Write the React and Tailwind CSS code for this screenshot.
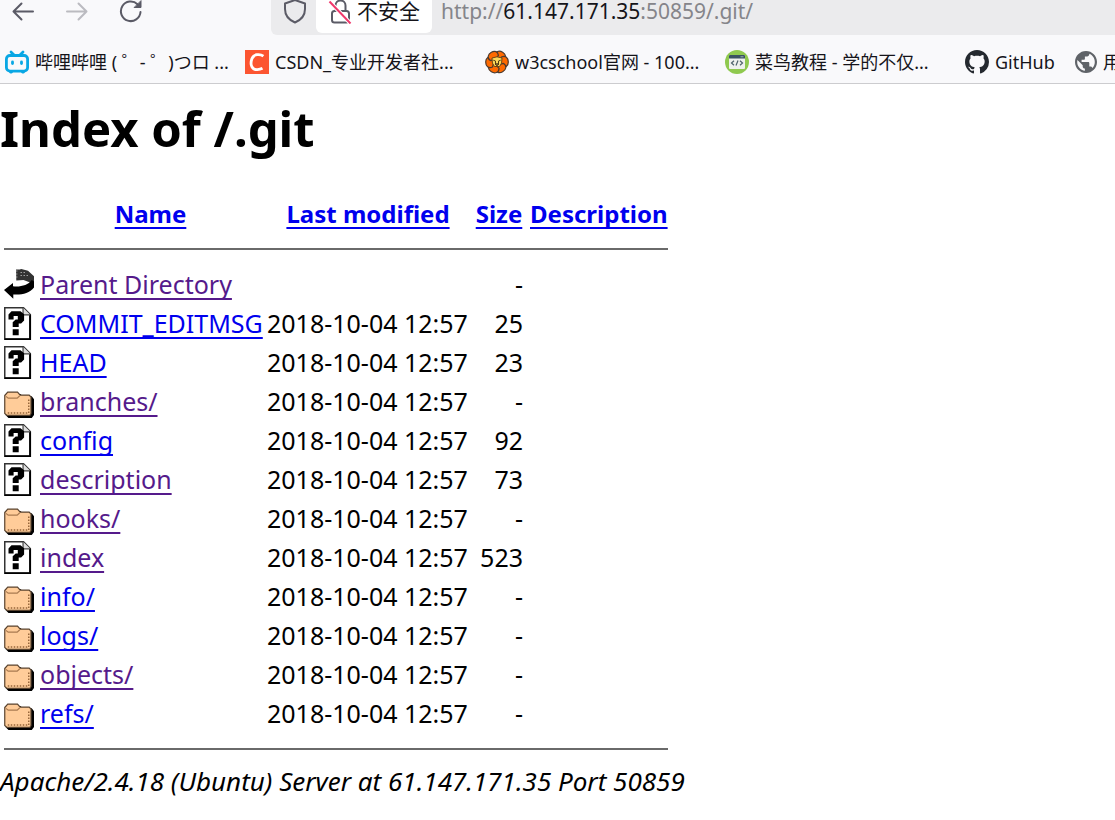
import React from 'react';

const files = [
  ['back', 'Parent Directory', '', '-', true],
  ['unknown', 'COMMIT_EDITMSG', '2018-10-04 12:57', '25', false],
  ['unknown', 'HEAD', '2018-10-04 12:57', '23', false],
  ['folder', 'branches/', '2018-10-04 12:57', '-', true],
  ['unknown', 'config', '2018-10-04 12:57', '92', false],
  ['unknown', 'description', '2018-10-04 12:57', '73', true],
  ['folder', 'hooks/', '2018-10-04 12:57', '-', true],
  ['unknown', 'index', '2018-10-04 12:57', '523', true],
  ['folder', 'info/', '2018-10-04 12:57', '-', false],
  ['folder', 'logs/', '2018-10-04 12:57', '-', false],
  ['folder', 'objects/', '2018-10-04 12:57', '-', true],
  ['folder', 'refs/', '2018-10-04 12:57', '-', false],
];

function FileIcon({ type }) {
  return (
    <svg viewBox="0 0 20 22" className="block h-[33px] w-[30px]" aria-hidden="true">
      {type === 'unknown' && (
        <>
          <path d="M.5 .5H13L17.5 5V21.5H.5Z" fill="#fff" stroke="#333" />
          <path d="M17.4 5V21.4H.5" fill="none" stroke="#000" strokeWidth="1.3" />
          <path d="M12.7 .5V5.2H17.5" fill="#ddd" stroke="#444" strokeWidth=".8" />
          <path d="M3 5L5 2.8H11L13.4 4.8V9L11.4 11H9.8V13.4H5.8V10.2L7.8 8.4H9.2V6H6.4V8.4H3ZM5.8 14.8H9.8V18.8H5.8Z" fill="#000" />
        </>
      )}
      {type === 'folder' && (
        <>
          <path d="M2.5 6H11L12.5 7.5H18.5L20 9.5V20L18.5 22H3L1 20Z" fill="#000" />
          <path d="M.5 7L2.5 4.7H9L10.8 6.7H16.8L18 8V19L17.2 20.3H2L.5 19Z" fill="#fc9" stroke="#59432f" strokeWidth=".8" />
          <path d="M1.3 7.6L2.8 8.8H8.8L10.5 7.2" fill="none" stroke="#a97a50" strokeWidth=".8" />
          <path d="M2.5 18.7H16.5V9" fill="none" stroke="#97663a" strokeWidth="1" strokeDasharray="1 1" />
        </>
      )}
      {type === 'back' && (
        <>
          <path d="M8 1H10.5L11.5 .6L16 1.8L20 5.5V12L17 9.5L13 8L8.2 8.3Z" fill="#333" />
          <path d="M8 2H10M8 4H10M8 6H10M11 3H15M11 5H16" stroke="#aaa" strokeWidth=".6" strokeDasharray="1 1" />
          <path d="M0 14.7L6 10V12.2C11 12.8 16 11.5 18.5 8L20 9V13C17 17 11.5 18 6.2 17.6V20.5Z" fill="#000" />
        </>
      )}
    </svg>
  );
}

function BilibiliIcon() {
  return (
    <svg viewBox="0 0 24 24" className="size-6 shrink-0" fill="none" stroke="#09a7e4" strokeWidth="2.8" strokeLinecap="round" aria-hidden="true">
      <path d="M6 2L9 5M18 2L15 5" />
      <rect x="1.4" y="5.5" width="21.2" height="15.6" rx="3.5" />
      <path d="M7.5 12V13.5M16.5 12V13.5M5.5 22H6.5M17.5 22H18.5" />
    </svg>
  );
}

function CsdnIcon() {
  return (
    <svg viewBox="0 0 24 24" className="size-6 shrink-0" aria-hidden="true">
      <path d="M0 0H24V24H0Z" fill="#fc5531" />
      <path d="M18.4 6.2C14.8 3.5 8.5 4 6.8 9C4.8 15 7 20 12.3 19.7C14.5 19.6 16 19.1 17.5 18.3" fill="none" stroke="#fff" strokeWidth="2.8" />
    </svg>
  );
}

function LionIcon() {
  return (
    <svg viewBox="0 0 24 24" className="size-6 shrink-0" aria-hidden="true">
      <g fill="#ff6a00" stroke="#4a3a30" strokeWidth="1.2">
        {[30, 90, 150, 210, 270, 330].map((a) => (
          <path key={a} transform={`rotate(${a} 12 12)`} d="M7 7.5C5 3.5 8 .7 12 .7C16 .7 18 3.5 16.5 7L12 9Z" />
        ))}
      </g>
      <path d="M7 8L12 6.8L17 8L16.6 13L14.6 16.5H9.4L7.4 13Z" fill="#fbd85a" stroke="#6b4415" />
      <path d="M8.3 10.2L10.5 11M15.7 10.2L13.5 11M10.5 11V14H13.5V11M10 14H14L12 15.8Z" fill="none" stroke="#523b17" strokeWidth="1" />
    </svg>
  );
}

function RunoobIcon() {
  return (
    <svg viewBox="0 0 24 24" className="size-6 shrink-0" aria-hidden="true">
      <circle cx="12" cy="12" r="12" fill="#8fc94f" />
      <rect x="4" y="5" width="16" height="14" rx="1" fill="#eef1ed" />
      <path d="M4 8.4V6Q4 5 5 5H19Q20 5 20 6V8.4Z" fill="#3a5262" />
      <path d="M15.5 6.8H18.5" stroke="#b5cbd2" strokeWidth=".8" />
      <path d="M9 10.8L6.5 13L9 15.2M15 10.8L17.5 13L15 15.2M13 10.5L11 15.5" fill="none" stroke="#50636c" strokeWidth="1.2" />
    </svg>
  );
}

function GithubIcon() {
  return (
    <svg viewBox="0 0 16 16" className="size-6 shrink-0" fill="#24292f" aria-hidden="true">
      <path d="M8 0C3.58 0 0 3.58 0 8c0 3.54 2.29 6.53 5.47 7.59.4.07.55-.17.55-.38 0-.19-.01-.82-.01-1.49-2.01.37-2.53-.49-2.69-.94-.09-.23-.48-.94-.82-1.13-.28-.15-.68-.52-.01-.53.63-.01 1.08.58 1.23.82.72 1.21 1.87.87 2.33.66.07-.52.28-.87.51-1.07-1.78-.2-3.64-.89-3.64-3.95 0-.87.31-1.59.82-2.15-.08-.2-.36-1.02.08-2.12 0 0 .67-.21 2.2.82.64-.18 1.32-.27 2-.27s1.36.09 2 .27c1.53-1.04 2.2-.82 2.2-.82.44 1.1.16 1.92.08 2.12.51.56.82 1.27.82 2.15 0 3.07-1.87 3.75-3.65 3.95.29.25.54.73.54 1.48 0 1.07-.01 1.93-.01 2.2 0 .21.15.46.55.38A8.01 8.01 0 0 0 16 8c0-4.42-3.58-8-8-8z" />
    </svg>
  );
}

function GlobeIcon() {
  return (
    <svg viewBox="2 2 20 20" className="size-[22px] shrink-0" fill="#5f6368" aria-hidden="true">
      <path d="M12 2C6.48 2 2 6.48 2 12s4.48 10 10 10 10-4.48 10-10S17.52 2 12 2zm-1 17.93c-3.95-.49-7-3.85-7-7.93 0-.62.08-1.21.21-1.79L9 15v1c0 1.1.9 2 2 2v1.93zm6.9-2.54c-.26-.81-1-1.39-1.9-1.39h-1v-3c0-.55-.45-1-1-1H8v-2h2c.55 0 1-.45 1-1V7h2c1.1 0 2-.9 2-2v-.41c2.93 1.19 5 4.06 5 7.41 0 2.08-.8 3.97-2.1 5.39z" />
    </svg>
  );
}

const bookmarks = [
  ['哔哩哔哩 ( ゜- ゜)つロ ...', <BilibiliIcon />, 'w-[240px]'],
  ['CSDN_专业开发者社...', <CsdnIcon />, 'w-[240px]'],
  ['w3cschool官网 - 100...', <LionIcon />, 'w-[240px]'],
  ['菜鸟教程 - 学的不仅...', <RunoobIcon />, 'w-[240px]'],
  ['GitHub', <GithubIcon />, 'w-[110px]'],
  ['用', <GlobeIcon />, 'w-[110px]'],
];

const link = 'underline decoration-2 underline-offset-4 [text-decoration-skip-ink:none]';

export default function App() {
  return (
    <div className="min-h-screen overflow-hidden bg-white font-['Noto_Sans','Noto_Sans_CJK_SC',sans-serif] text-black">
      <header className="border-b border-[#cccccf] bg-[#f9f9fb] text-[#15141a]">
        <div className="flex h-[35px] items-start">
          <nav className="flex w-[271px] shrink-0 gap-[30px] pl-[11px]" aria-label="Navigation">
            <button className="h-6 w-6" aria-label="Back">
              <svg viewBox="0 0 24 24" className="size-6" fill="none" stroke="#5b5b66" strokeWidth="2" strokeLinecap="round" strokeLinejoin="round"><path d="M22 11.5H2.5M10.5 3.5L2.5 11.5L10.5 19.5" /></svg>
            </button>
            <button className="h-6 w-6" aria-label="Forward" disabled>
              <svg viewBox="0 0 24 24" className="size-6" fill="none" stroke="#bbbbc0" strokeWidth="2" strokeLinecap="round" strokeLinejoin="round"><path d="M2 11.5H21.5M13.5 3.5L21.5 11.5L13.5 19.5" /></svg>
            </button>
            <button className="h-6 w-6" aria-label="Reload">
              <svg viewBox="0 0 24 24" className="size-6" fill="none" stroke="#5b5b66" strokeWidth="2" strokeLinecap="round"><path d="M21.5 12A9.8 9.8 0 1 1 18.5 4.2" /><path d="M22 1V7.5H15.5Z" fill="#5b5b66" stroke="#5b5b66" strokeWidth="1" strokeLinejoin="round" /></svg>
            </button>
          </nav>
          <div className="flex h-[35px] min-w-0 flex-1 items-start rounded-bl-md bg-[#ebebed]">
            <button className="w-[45px] pl-3" aria-label="Tracking protection">
              <svg viewBox="0 0 24 24" className="size-6" fill="none" stroke="#5b5b66" strokeWidth="2" strokeLinejoin="round"><path d="M12 0L22 3.5V9C22 15 18 20 12 22.5C6 20 2 15 2 9V3.5Z" /></svg>
            </button>
            <button className="flex h-[33px] w-[116px] shrink-0 items-start gap-[5px] rounded-b-md bg-white pl-3">
              <svg viewBox="0 0 24 24" className="size-6 shrink-0" fill="none" stroke="#5b5b66" strokeWidth="2" aria-hidden="true"><rect x="4" y="11" width="17" height="11.5" rx="2.5" /><path d="M7.5 11V5.5A5 5 0 0 1 17.5 5.5V11" /><path d="M1.5 1.5L22.5 23.5" stroke="#fff" strokeWidth="4" /><path d="M1.5 1.5L22.5 23.5" stroke="#f0386b" /></svg>
              <span className="text-[21px] leading-[22px]">不安全</span>
            </button>
            <span className="pl-[9px] text-[21px] leading-[22px] text-[#85858a]">http://<span className="text-[#15141a]">61.147.171.35</span>:50859/.git/</span>
          </div>
        </div>
        <nav className="flex h-12 items-center overflow-hidden pt-[5px] pl-[5px]" aria-label="Bookmarks">
          {bookmarks.map(([label, icon, width]) => (
            <a key={label} href="#" className={`flex shrink-0 items-center gap-[6px] text-lg whitespace-pre ${width}`}>
              {icon}
              <span>{label}</span>
            </a>
          ))}
        </nav>
      </header>
      <main>
        <h1 className="pt-3 pb-[34px] text-[49px] leading-[64px] font-bold">Index of /.git</h1>
        <table className="w-[668px] table-fixed border-collapse text-[25px] leading-[39px]">
          <colgroup>
            <col className="w-[40px]" />
            <col className="w-[227px]" />
            <col className="w-[208px]" />
            <col className="w-[48px]" />
            <col className="w-[145px]" />
          </colgroup>
          <thead>
            <tr className="text-2xl leading-[39px] whitespace-nowrap text-[#0000ee]">
              <td />
              <th className="pr-[6px]"><a href="#" className={link}>Name</a></th>
              <th className="pr-[6px]"><a href="#" className={link}>Last modified</a></th>
              <th><a href="#" className={link}>Size</a></th>
              <th className="pl-[7px] text-left"><a href="#" className={link}>Description</a></th>
            </tr>
            <tr><td colSpan="5" className="h-8 pl-1"><hr className="border-t-2 border-[#6a6a6a]" /></td></tr>
          </thead>
          <tbody>
            {files.map(([type, name, date, size, visited]) => (
              <tr key={name} className="h-[39px] whitespace-nowrap">
                <td className="p-0 pl-1"><FileIcon type={type} /></td>
                <td className="p-0"><a href="#" className={`${link} ${visited ? 'text-[#551a8b]' : 'text-[#0000ee]'}`}>{name}</a></td>
                <td className="p-0">{date}</td>
                <td className="p-0 text-right">{size}</td>
                <td />
              </tr>
            ))}
            <tr><td colSpan="5" className="h-8 pl-1"><hr className="border-t-2 border-[#6a6a6a]" /></td></tr>
          </tbody>
        </table>
        <address className="text-[26px] leading-8 italic">Apache/2.4.18 (Ubuntu) Server at 61.147.171.35 Port 50859</address>
      </main>
    </div>
  );
}
